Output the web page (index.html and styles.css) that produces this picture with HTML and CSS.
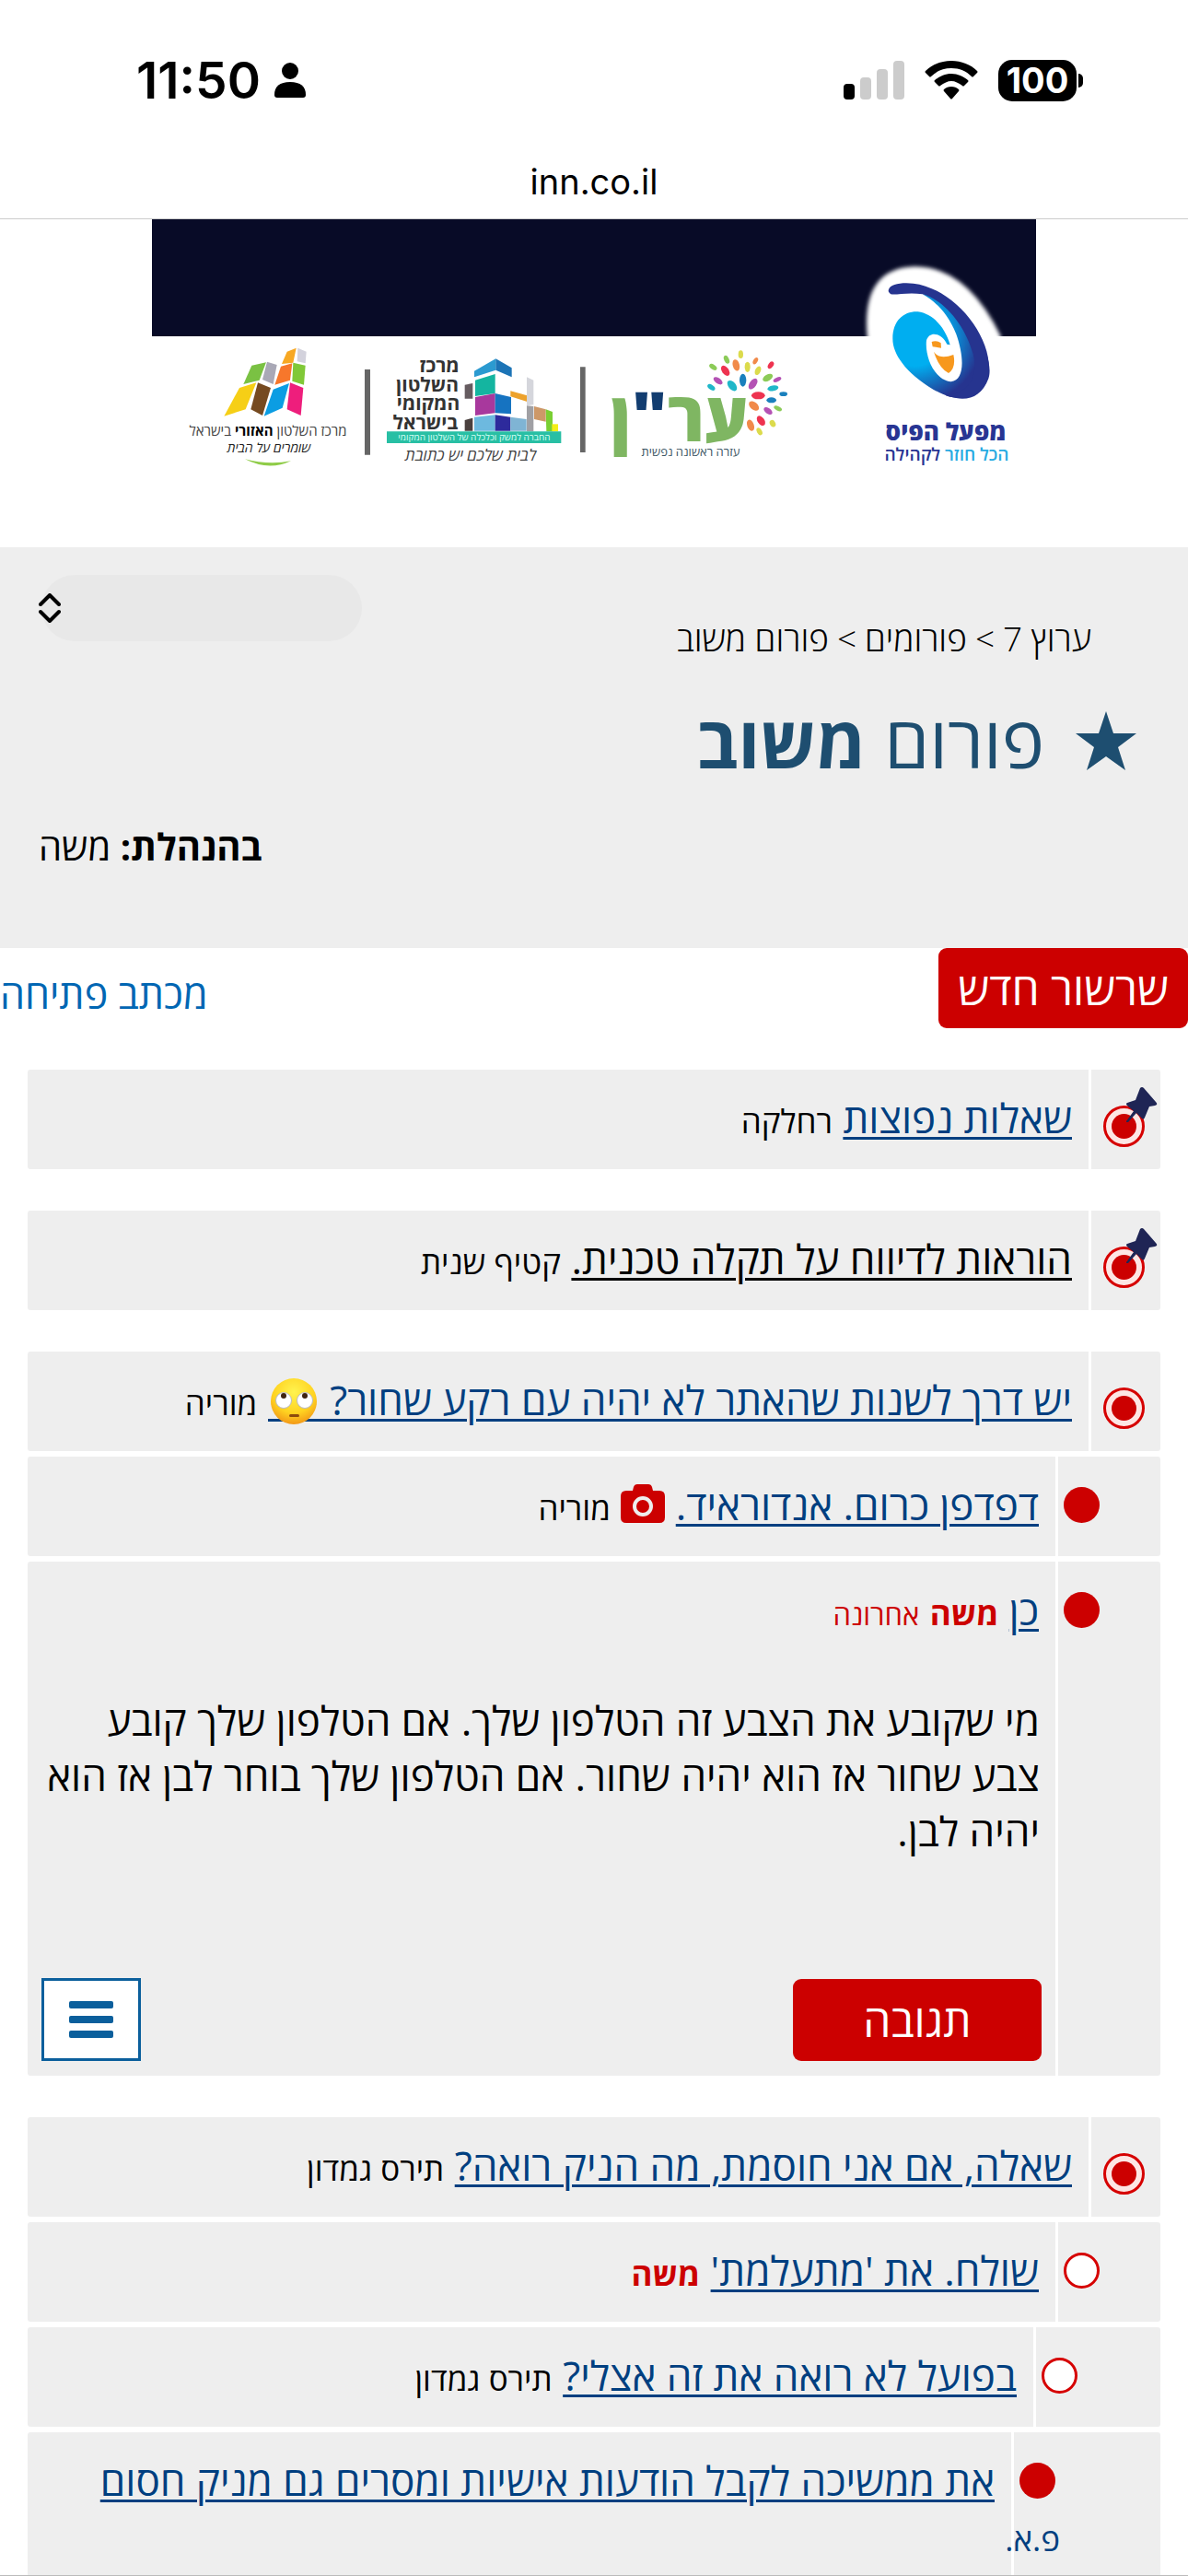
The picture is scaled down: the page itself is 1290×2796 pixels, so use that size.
FILE: index.html
```html
<!DOCTYPE html>
<html lang="he" dir="rtl">
<head>
<meta charset="utf-8">
<meta name="viewport" content="width=device-width, initial-scale=1">
<title>פורום משוב</title>
<link rel="stylesheet" href="styles.css">
</head>
<body>
<svg class="symbols" aria-hidden="true">
  <symbol id="root-dot" viewBox="0 0 45 45"><circle cx="22.5" cy="22.5" r="21" fill="#fde6e4" stroke="#d60000" stroke-width="3"/><circle cx="22.5" cy="22.5" r="13.5" fill="#c00"/></symbol>
  <symbol id="full-dot" viewBox="0 0 39 39"><circle cx="19.5" cy="19.5" r="19.5" fill="#c00"/></symbol>
  <symbol id="empty-dot" viewBox="0 0 39 39"><circle cx="19.5" cy="19.5" r="18" fill="#fff" stroke="#d60000" stroke-width="3"/></symbol>
  <symbol id="pin" viewBox="0 0 36 38"><path d="M17 1q2-2 4 0l13 15q3 3-1 4l-6 1-5 12q-1 3-3 1l-6-6-9 10q-2 1-2-1l8-11-7-6q-2-2 0-3l9-3z" fill="#1f2555"/></symbol>
</svg>

<div class="chrome" dir="ltr">
  <div class="status">
    <div class="status-side">
      <span class="clock">11:50</span>
      <svg width="36" height="40" viewBox="0 0 36 40"><circle cx="18" cy="10" r="9" /><path d="M1 36Q1 22 18 22T35 36Q35 39 32 39H4Q1 39 1 36Z"/></svg>
    </div>
    <div class="status-side">
      <svg width="66" height="44" viewBox="0 0 66 44"><rect x="0" y="26" width="12" height="17" rx="4"/><g fill="#ccc"><rect x="18" y="19" width="12" height="24" rx="4"/><rect x="36" y="10" width="12" height="33" rx="4"/><rect x="54" y="1" width="12" height="42" rx="4"/></g></svg>
      <svg class="wifi" width="58" height="44" viewBox="0 0 58 44"><path d="M29 1C18 1 8 5 1 12q-1 1 0 2l4 4q1 1 2 0c6-6 13-9 22-9s16 3 22 9q1 1 2 0l4-4q1-1 0-2C50 5 40 1 29 1Z"/><path d="M29 15c-7 0-13 3-18 7q-1 1 0 2l4 4q1 1 2 0c4-3 8-5 12-5s8 2 12 5q1 1 2 0l4-4q1-1 0-2c-5-4-11-7-18-7Z"/><path d="M29 29c-3 0-6 1-8 3q-1 1 0 2l7 8q1 1 2 0l7-8q1-1 0-2c-2-2-5-3-8-3Z"/></svg>
      <span class="battery">100</span>
    </div>
  </div>
  <div class="address">inn.co.il</div>
</div>

<main class="view">
  <div class="banner">
    <svg class="banner-art" viewBox="0 0 960 300" role="img" aria-label="מפעל הפיס, ערן, מרכז השלטון המקומי, מרכז השלטון האזורי">
      <defs>
        <filter id="soft"><feGaussianBlur stdDeviation="6"/></filter>
        <radialGradient id="pais" gradientUnits="userSpaceOnUse" cx="1060" cy="400" r="220"><stop offset=".45" stop-color="#00aef0"/><stop offset="1" stop-color="#26348f"/></radialGradient>
      </defs>
      <rect width="960" height="127" fill="#080b27"/>
      <g transform="translate(-5 -7) scale(.33333)">
        <path d="M455 452 485 440 475 488 438 492Z" fill="#f7a823"/><path d="M490 440 518 452 515 490 488 484Z" fill="#d3d2dc"/>
        <path d="M340 497 387 487 365 545 313 558Z" fill="#7ac143"/><path d="M390 485 422 495 410 558 375 543Z" fill="#a9a8b6"/><path d="M435 500 472 490 465 545 415 560Z" fill="#f7772b"/><path d="M475 488 515 497 510 560 472 548Z" fill="#80c837"/>
        <path d="M300 570 355 553 320 640 250 662Z" fill="#f6cf16"/><path d="M360 553 402 570 375 660 337 640Z" fill="#764a20"/><path d="M410 575 462 555 440 635 380 662Z" fill="#0b9de3"/><path d="M465 553 508 570 500 660 455 640Z" fill="#ee1e7c"/>
        <path d="M318 802Q395 822 468 808 395 842 318 802Z" fill="#8fcc48"/>
        <path d="M708 510h18v278h-18zM1410 502h17v278h-17z" fill="#666"/>
        <path d="M1065 515 1135 475V512L1065 535Z" fill="#2b9ad0"/><path d="M1135 475 1187 505V535L1135 512Z" fill="#1c74b6"/>
        <path d="M1068 545 1133 525V588L1068 597Z" fill="#14b5a0"/><path d="M1068 600 1133 588V652L1068 660Z" fill="#a8389d"/><path d="M1133 588 1185 600V655L1133 652Z" fill="#1673c1"/>
        <path d="M1065 665 1133 658V710H1065Z" fill="#6db9df"/><path d="M1133 658 1183 665V710H1133Z" fill="#2d2a9c"/><path d="M1183 665 1235 672V710H1183Z" fill="#7fb4d4"/>
        <path d="M1183 580 1237 595V615L1183 598Z" fill="#eda22c"/><path d="M1236 535 1258 545V625L1236 628Z" fill="#d5d6dc"/><path d="M1236 628 1258 630V712H1236Z" fill="#a0a0a4"/>
        <path d="M1260 630 1298 640V680L1260 672Z" fill="#cd9868"/><path d="M1298 640 1320 648V712H1300Z" fill="#79cf33"/><path d="M1318 688h20v24h-20z" fill="#f4ee16"/>
        <path d="M1034 560 1060 555V605H1034Z" fill="#665c60"/><path d="M1034 675 1060 668V710H1034Z" fill="#4a403e"/>
        <path d="M780 712H1348V750H780Z" fill="#28bfa4"/>
      </g>
      <g transform="translate(475 -7) scale(.33333)">
        <path d="M905 402Q885 180 1060 175 1230 175 1340 402L1340 560H905Z" fill="#fff" filter="url(#soft)"/>
        <path d="M880 404H1360V600H880Z" fill="#fff"/>
        <path d="M988 410C988 350 1025 320 1070 322C1120 328 1160 375 1175 430L1165 428C1150 395 1110 380 1098 415C1092 470 1125 545 1178 550C1225 545 1220 465 1195 395C1165 320 1120 285 1085 265L1150 270C1260 350 1320 480 1300 540C1270 620 1200 620 1120 575C1030 520 988 460 988 410Z" fill="url(#pais)"/>
        <path d="M975 250C978 232 1020 225 1055 230C1190 245 1320 410 1300 530C1285 600 1220 615 1160 595C1230 590 1270 540 1250 460C1225 370 1160 285 1085 265C1040 258 1000 268 982 265C974 260 973 254 975 250Z" fill="#26348f"/>
        <path d="M1115 420Q1130 414 1145 424L1146 440 1118 436ZM1122 452Q1140 480 1186 462 1195 505 1170 522 1138 505 1122 452Z" fill="#f7981d"/>
        <g fill="#ee3350"><ellipse cx="443" cy="514" rx="11" ry="19" transform="rotate(-35 443 514)"/><ellipse cx="550" cy="595" rx="22" ry="12"/><ellipse cx="559" cy="677" rx="11" ry="18" transform="rotate(-35 559 677)"/><ellipse cx="591" cy="496" rx="8" ry="13" transform="rotate(35 591 496)"/></g>
        <g fill="#f18a4a"><ellipse cx="478" cy="496" rx="11" ry="19" transform="rotate(-15 478 496)"/><ellipse cx="536" cy="629" rx="19" ry="12" transform="rotate(40 536 629)"/><ellipse cx="525" cy="692" rx="11" ry="19" transform="rotate(-20 525 692)"/><ellipse cx="541" cy="482" rx="7" ry="12" transform="rotate(30 541 482)"/></g>
        <g fill="#b452b4"><ellipse cx="419" cy="547" rx="17" ry="9" transform="rotate(35 419 547)"/><ellipse cx="533" cy="557" rx="11" ry="20" transform="rotate(35 533 557)"/><ellipse cx="582" cy="645" rx="16" ry="9" transform="rotate(35 582 645)"/><ellipse cx="612" cy="543" rx="14" ry="7" transform="rotate(-25 612 543)"/></g>
        <g fill="#1fb7c9"><ellipse cx="465" cy="563" rx="12" ry="20" transform="rotate(-40 465 563)"/><ellipse cx="397" cy="568" rx="14" ry="8" transform="rotate(35 397 568)"/><ellipse cx="598" cy="571" rx="18" ry="9" transform="rotate(-10 598 571)"/></g>
        <g fill="#1a80bd"><ellipse cx="500" cy="545" rx="11" ry="21"/><ellipse cx="593" cy="610" rx="16" ry="9"/><ellipse cx="632" cy="590" rx="13" ry="7"/></g>
        <g fill="#8ccb58"><ellipse cx="403" cy="502" rx="14" ry="8" transform="rotate(35 403 502)"/><ellipse cx="447" cy="478" rx="8" ry="14" transform="rotate(-25 447 478)"/><ellipse cx="581" cy="537" rx="18" ry="10" transform="rotate(-30 581 537)"/><ellipse cx="614" cy="637" rx="14" ry="7" transform="rotate(25 614 637)"/></g>
        <g fill="#dcdb4c"><ellipse cx="515" cy="502" rx="9" ry="17"/><ellipse cx="549" cy="514" rx="9" ry="15" transform="rotate(25 549 514)"/><ellipse cx="493" cy="461" rx="8" ry="13"/><ellipse cx="597" cy="686" rx="9" ry="12" transform="rotate(-30 597 686)"/><ellipse cx="554" cy="712" rx="8" ry="13" transform="rotate(-30 554 712)"/></g>
      </g>
      <g text-anchor="middle" class="art-text">
        <text x="126" y="235" font-size="15" fill="#444">מרכז השלטון <tspan font-weight="700" fill="#000">האזורי</tspan> בישראל</text>
        <text x="127" y="253" font-size="14" font-style="italic" fill="#222">שומרים על הבית</text>
        <g font-size="21" font-weight="700" fill="#333"><text x="312" y="166">מרכז</text><text x="299" y="187">השלטון</text><text x="300" y="207">המקומי</text><text x="297" y="228">בישראל</text></g>
        <text x="350" y="240" font-size="10" fill="#d8fff6">החברה למשק וכלכלה של השלטון המקומי</text>
        <text x="346" y="262" font-size="17" font-style="italic" fill="#444">לבית שלכם יש כתובת</text>
        <text x="573" y="241" font-size="74" font-weight="800" fill="#7fb662">ער<tspan fill="#123d70">"</tspan>ן</text>
        <text x="585" y="257" font-size="13" fill="#3c5564">עזרה ראשונה נפשית</text>
        <text x="862" y="240" font-size="26" font-weight="800" fill="#283593">מפעל הפיס</text>
        <text x="863" y="262" font-size="19" font-weight="600" fill="#283593"><tspan fill="#29abe2">הכל חוזר</tspan> לקהילה</text>
      </g>
    </svg>
  </div>

  <header class="forum-head">
    <div class="head-row">
      <nav class="crumbs"><a href="#">ערוץ 7</a><span>&gt;</span><a href="#">פורומים</a><span>&gt;</span><a href="#">פורום משוב</a></nav>
      <div class="picker">
        <select aria-label="בחירת פורום"><option></option></select>
        <svg class="picker-arrows" width="24" height="32" viewBox="0 0 24 32" fill="none" stroke="#000" stroke-width="4" stroke-linecap="round" stroke-linejoin="round"><path d="M2 12 12 2 22 12M2 20 12 30 22 20"/></svg>
      </div>
    </div>
    <h1 class="forum-title">
      <svg width="66" height="64" viewBox="0 0 66 64"><path d="M33 0 41 24H66L46 39 54 64 33 49 12 64 20 39 0 24H25Z" fill="#1e4e70"/></svg>
      <span>פורום <b>משוב</b></span>
    </h1>
    <p class="manager"><b>בהנהלת:</b> משה</p>
  </header>

  <div class="actions">
    <button class="btn btn-new" type="button">שרשור חדש</button>
    <a class="opening" href="#">מכתב פתיחה</a>
  </div>

  <div class="threads">
    <section class="thread">
      <article class="row root"><span class="mark"><svg class="dot"><use href="#root-dot"/></svg><svg class="pin"><use href="#pin"/></svg></span><a class="subject" href="#">שאלות נפוצות</a> <span class="author">רחלקה</span></article>
    </section>
    <section class="thread">
      <article class="row root"><span class="mark"><svg class="dot"><use href="#root-dot"/></svg><svg class="pin"><use href="#pin"/></svg></span><a class="subject read" href="#">הוראות לדיווח על תקלה טכנית.</a> <span class="author">קטיף שנית</span></article>
    </section>
    <section class="thread">
      <article class="row root"><span class="mark"><svg class="dot"><use href="#root-dot"/></svg></span><a class="subject" href="#">יש דרך לשנות שהאתר לא יהיה עם רקע שחור? <svg class="emoji" viewBox="-3 0 56 50"><defs><radialGradient id="face" cx=".5" cy=".3" r=".75"><stop offset="0" stop-color="#fff34f"/><stop offset=".6" stop-color="#ffd321"/><stop offset="1" stop-color="#f08d15"/></radialGradient></defs><rect x="-3" y="44" width="56" height="3" fill="#003f80"/><circle cx="25" cy="25" r="25" fill="url(#face)"/><g fill="#fff" stroke="#b9b9c4"><circle cx="14" cy="24" r="8.5"/><circle cx="37" cy="24" r="8.5"/></g><circle cx="14" cy="19" r="3" fill="#3f2412"/><circle cx="37" cy="19" r="3" fill="#3f2412"/><rect x="20" y="39" width="11" height="3" rx="1.5" fill="#8d4b0c"/></svg></a> <span class="author">מוריה</span></article>
      <article class="row reply"><span class="mark"><svg class="dot"><use href="#full-dot"/></svg></span><a class="subject" href="#">דפדפן כרום. אנדוראיד.</a> <svg class="camera" viewBox="0 0 48 42"><path d="M6 7h7l1-4q1-3 4-3h12q3 0 4 3l1 4h7q6 0 6 6v23q0 6-6 6H6q-6 0-6-6V13q0-6 6-6Z" fill="#c00"/><circle cx="24" cy="24" r="9" fill="none" stroke="#eee" stroke-width="4"/></svg> <span class="author">מוריה</span></article>
      <article class="row reply"><span class="mark"><svg class="dot"><use href="#full-dot"/></svg></span><a class="subject" href="#">כן</a> <span class="author manager-name"><b>משה</b></span> <span class="last">אחרונה</span>
        <div class="message">
          <p>מי שקובע את הצבע זה הטלפון שלך. אם הטלפון שלך קובע צבע שחור אז הוא יהיה שחור. אם הטלפון שלך בוחר לבן אז הוא יהיה לבן.</p>
          <div class="message-actions">
            <button class="btn btn-reply" type="button">תגובה</button>
            <button class="btn-menu" type="button" aria-label="תפריט"><svg width="48" height="42" viewBox="0 0 48 42" fill="#0b5f9c"><rect y="1" width="48" height="8" rx="2"/><rect y="17" width="48" height="8" rx="2"/><rect y="33" width="48" height="8" rx="2"/></svg></button>
          </div>
        </div>
      </article>
    </section>
    <section class="thread">
      <article class="row root"><span class="mark"><svg class="dot"><use href="#root-dot"/></svg></span><a class="subject" href="#">שאלה, אם אני חוסמת, מה הניק רואה?</a> <span class="author">תירס גמדון</span></article>
      <article class="row reply"><span class="mark"><svg class="dot"><use href="#empty-dot"/></svg></span><a class="subject" href="#">שולח. את 'מתעלמת'</a> <span class="author manager-name"><b>משה</b></span></article>
      <article class="row reply level-2"><span class="mark"><svg class="dot"><use href="#empty-dot"/></svg></span><a class="subject" href="#">בפועל לא רואה את זה אצלי?</a> <span class="author">תירס גמדון</span></article>
      <article class="row reply level-3"><span class="mark"><svg class="dot"><use href="#full-dot"/></svg></span><a class="subject" href="#">את ממשיכה לקבל הודעות אישיות ומסרים גם מניק חסום</a> <span class="author guest">פ.א.</span></article>
    </section>
  </div>
</main>
</body>
</html>
```
FILE: styles.css
```css
* { box-sizing: border-box; }

body {
  margin: 0;
  height: 100vh;
  display: flex;
  flex-direction: column;
  background: #fff;
  color: #000;
  font-family: "Open Sans", "Noto Sans", "DejaVu Sans", sans-serif;
  font-size: 44px;
  line-height: 60px;
  border-bottom: 1px solid #bbb;
}

a { color: inherit; text-decoration: none; }
button { font-family: inherit; cursor: pointer; }
.symbols { position: absolute; width: 0; height: 0; }

/* Browser chrome */
.chrome {
  flex: none;
  border-bottom: 1px solid #ccc;
  font-family: Inter, "Liberation Sans", sans-serif;
}
.status {
  display: flex;
  justify-content: space-between;
  padding: 57px 121px 0 148px;
}
.status-side { display: flex; align-items: center; gap: 14px; }
.clock { font-size: 55px; font-weight: 600; }
.wifi { margin: 0 8px; }
.battery {
  position: relative;
  width: 85px;
  border-radius: 15px;
  background: #000;
  color: #fff;
  font-size: 38px;
  font-weight: 700;
  line-height: 45px;
  text-align: center;
}
.battery::after {
  content: "";
  position: absolute;
  left: 87px;
  top: 15px;
  width: 5px;
  height: 15px;
  border-radius: 0 5px 5px 0;
  background: #000;
}
.address { padding: 50px 0 10px; font-size: 38px; text-align: center; }

/* Page */
.view { flex: 1; min-height: 0; overflow-y: auto; scrollbar-width: none; }
.banner { padding: 0 165px 56px; }
.banner-art { display: block; width: 100%; }
.art-text { direction: rtl; }

.forum-head { background: #eee; padding: 30px 42px 80px; }
.head-row { display: flex; justify-content: space-between; align-items: flex-start; }
.crumbs { display: flex; gap: 9px; padding: 39px 63px 0 0; font-size: 37px; font-weight: 300; }
.picker { position: relative; width: 351px; }
.picker select {
  display: block;
  width: 348px;
  height: 72px;
  border: 0;
  border-radius: 36px;
  background: #e8e8e8;
  appearance: none;
}
.picker-arrows { position: absolute; left: 0; top: 20px; }
.forum-title {
  display: flex;
  align-items: center;
  gap: 34px;
  margin: 24px 0 0;
  padding-right: 14px;
  color: #1e4e70;
  font-size: 78px;
  font-weight: 400;
  line-height: 114px;
}
.manager { margin: 28px 0 0; text-align: left; font-size: 40px; }

.actions { display: flex; justify-content: space-between; align-items: flex-start; }
.btn {
  border: 0;
  border-radius: 9px;
  background: #c00;
  color: #fff;
  font-size: 48px;
  line-height: 87px;
}
.btn-new { padding: 0 21px; }
.opening { padding-top: 20px; font-size: 43px; color: #0066b3; }

.threads { padding: 45px 30px 0; }
.thread { margin-bottom: 45px; }

/* A row is split by a white rule between its marker column and its text. */
.row {
  --start: 61px;
  --rule: calc(var(--start) + 50px);
  display: flow-root;
  margin-bottom: 6px;
  padding: 22px var(--start) 26px 15px;
  border-radius: 3px;
  background: linear-gradient(to left, #eee var(--rule), #fff var(--rule), #fff calc(var(--rule) + 3px), #eee calc(var(--rule) + 3px));
}
.row.root { --start: 17px; --rule: 75px; }
.row.level-2 { --start: 85px; }
.row.level-3 { --start: 109px; }

.mark { position: relative; float: right; width: 71px; height: 60px; padding: 11px 5px 0 0; }
.dot { display: block; width: 39px; height: 39px; }
.root .mark { width: 79px; padding: 17px 0 0; }
.root .dot { width: 45px; height: 45px; }
.pin { position: absolute; right: -14px; top: -3px; width: 36px; height: 38px; }

.subject {
  color: #003f80;
  text-decoration: underline;
  text-decoration-thickness: 3px;
  text-underline-offset: 4px;
}
.subject.read { color: #000; }
.emoji { width: 56px; height: 50px; vertical-align: -10px; }
.camera { width: 48px; height: 42px; vertical-align: -3px; }
.author, .last { font-size: 35px; line-height: 48px; }
.manager-name { color: #c00; }
.guest { color: #003f80; }
.last { color: #c00; font-size: 31px; }

.message { padding: 60px 70px 0 0; }
.message p { margin: 0; }
.message-actions {
  display: flex;
  justify-content: space-between;
  align-items: flex-end;
  margin: 130px -2px -10px 0;
}
.btn-reply { width: 270px; }
.btn-menu {
  display: grid;
  place-items: center;
  width: 108px;
  height: 90px;
  padding: 0;
  border: 3px solid #0b5f9c;
  background: #fff;
}
```
